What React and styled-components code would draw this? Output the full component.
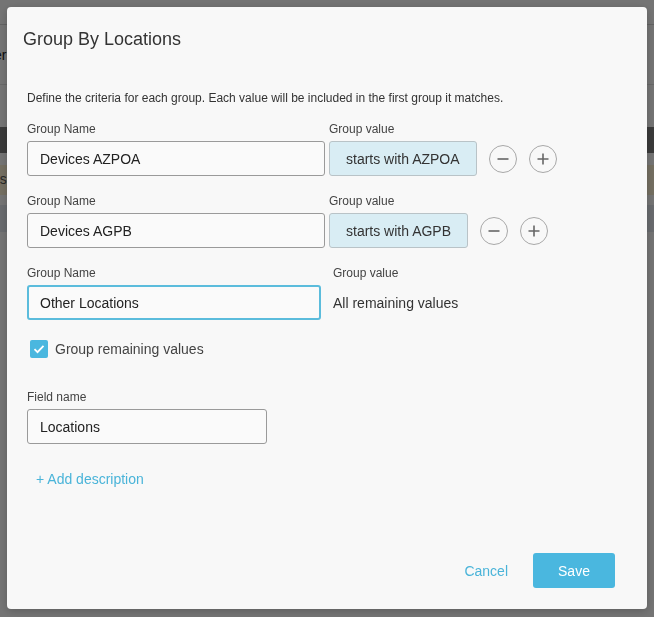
import React from 'react';
import styled, { createGlobalStyle } from 'styled-components';

const GlobalStyle = createGlobalStyle`
  html, body {
    margin: 0;
    padding: 0;
    background: #fff;
    font-family: "Liberation Sans", Arial, sans-serif;
  }
  * { box-sizing: border-box; }
`;

const Page = styled.div`
  width: 654px;
  height: 617px;
  overflow: hidden;
  display: flex;
  flex-direction: column;
  color: #222;
`;

const PageHeader = styled.div`
  height: 25px;
  border-bottom: 1px solid #d8d8d8;
`;

const PageSub = styled.div`
  height: 60px;
  border-bottom: 1px solid #e4e4e4;
  padding: 22px 0 0;
  font-size: 14px;
  margin-left: -6px;
`;

const PageBand = styled.div`
  height: ${(p) => p.h}px;
  margin-top: ${(p) => p.mt}px;
  background: ${(p) => p.bg};
  color: ${(p) => p.fg || '#222'};
  font-size: 14px;
  padding: 6px 0 0;
  margin-left: -8px;
`;

const Overlay = styled.div`
  position: fixed;
  inset: 0;
  background: rgba(0, 0, 0, 0.545);
  display: flex;
  align-items: flex-start;
  justify-content: center;
  padding-top: 7px;
`;

const Modal = styled.div`
  width: 640px;
  height: 602px;
  background: #f8f8f8;
  border-radius: 4px;
  display: flex;
  flex-direction: column;
  box-shadow: 0 2px 8px rgba(0, 0, 0, 0.2);
`;

const Header = styled.div`
  padding: 20px 16px 0;
`;

const Title = styled.h2`
  margin: 0;
  font-size: 18px;
  line-height: 24px;
  font-weight: 400;
  color: #333;
`;

const Body = styled.div`
  padding: 39px 20px 0;
  display: flex;
  flex-direction: column;
`;

const Description = styled.p`
  margin: 0 0 15px;
  font-size: 12px;
  line-height: 16px;
  color: #333;
`;

const GroupRow = styled.div`
  display: flex;
  align-items: flex-end;
  margin-bottom: 17px;
`;

const Field = styled.div`
  display: flex;
  flex-direction: column;
  gap: 4px;
  margin-left: ${(p) => p.ml || 0}px;
`;

const Label = styled.label`
  font-size: 12px;
  line-height: 16px;
  color: #444;
`;

const TextInput = styled.input`
  width: ${(p) => p.w}px;
  height: 35px;
  border: ${(p) => (p.focused ? '2px solid #5bbcdc' : '1px solid #9a9a9a')};
  border-radius: 3px;
  background: #fafafa;
  padding: 0 ${(p) => (p.focused ? 11 : 12)}px;
  font-family: inherit;
  font-size: 14px;
  color: #222;
  outline: none;
`;

const ValuePill = styled.div`
  height: 35px;
  display: flex;
  align-items: center;
  padding: 0 16px;
  background: #d9edf4;
  border: 1px solid #b9c3c7;
  border-radius: 3px;
  font-size: 14px;
  color: #333;
  white-space: nowrap;
`;

const PlainValue = styled.div`
  height: 35px;
  display: flex;
  align-items: center;
  font-size: 14px;
  color: #333;
`;

const Actions = styled.div`
  display: flex;
  gap: 12px;
  margin-left: 12px;
  height: 35px;
  align-items: center;
`;

const CircleButton = styled.button`
  width: 28px;
  height: 28px;
  border-radius: 50%;
  border: 1px solid #a8a8a8;
  background: transparent;
  padding: 0;
  display: flex;
  align-items: center;
  justify-content: center;
  color: #666;
`;

const CheckRow = styled.label`
  display: flex;
  align-items: center;
  gap: 7px;
  margin: 3px 0 31px 3px;
  font-size: 14px;
  color: #444;
`;

const CheckBox = styled.span`
  width: 18px;
  height: 18px;
  border-radius: 2px;
  background: #4ab7df;
  display: flex;
  align-items: center;
  justify-content: center;
`;

const LinkButton = styled.button`
  align-self: flex-start;
  border: none;
  background: transparent;
  font-family: inherit;
  font-size: 14px;
  color: ${(p) => p.color || '#4ab4d9'};
  padding: 8px 9px;
  margin-top: ${(p) => p.mt || 0}px;
`;

const Footer = styled.div`
  margin-top: auto;
  padding: 0 32px 21px 0;
  display: flex;
  justify-content: flex-end;
  align-items: center;
  gap: 9px;
`;

const CancelButton = styled.button`
  border: none;
  background: transparent;
  font-family: inherit;
  font-size: 14px;
  color: #4ab4d9;
  padding: 0 16px;
  height: 35px;
`;

const SaveButton = styled.button`
  width: 82px;
  height: 35px;
  border: none;
  border-radius: 3px;
  background: #4ab7df;
  color: #fff;
  font-family: inherit;
  font-size: 14px;
`;

const Minus = () => (
  <svg width="14" height="14" viewBox="0 0 14 14">
    <path d="M1.5 7h11" stroke="currentColor" strokeWidth="1.6" />
  </svg>
);

const Plus = () => (
  <svg width="14" height="14" viewBox="0 0 14 14">
    <path d="M1.5 7h11M7 1.5v11" stroke="currentColor" strokeWidth="1.6" />
  </svg>
);

const groups = [
  { name: 'Devices AZPOA', value: 'starts with AZPOA' },
  { name: 'Devices AGPB', value: 'starts with AGPB' },
];

export default function App() {
  return (
    <>
      <GlobalStyle />
      <Page>
        <PageHeader />
        <PageSub>er</PageSub>
        <PageBand h={26} mt={42} bg="#7f7f7f" fg="#e8e8e8">
          s
        </PageBand>
        <PageBand h={30} mt={12} bg="#fff4d6" fg="#555">
          es
        </PageBand>
        <PageBand h={27} mt={10} bg="#e6ebf2" />
      </Page>
      <Overlay>
        <Modal>
          <Header>
            <Title>Group By Locations</Title>
          </Header>
          <Body>
            <Description>
              Define the criteria for each group. Each value will be included in the first group it matches.
            </Description>
            {groups.map((g) => (
              <GroupRow key={g.name}>
                <Field>
                  <Label>Group Name</Label>
                  <TextInput w={298} defaultValue={g.name} />
                </Field>
                <Field ml={4}>
                  <Label>Group value</Label>
                  <ValuePill>{g.value}</ValuePill>
                </Field>
                <Actions>
                  <CircleButton>
                    <Minus />
                  </CircleButton>
                  <CircleButton>
                    <Plus />
                  </CircleButton>
                </Actions>
              </GroupRow>
            ))}
            <GroupRow>
              <Field>
                <Label>Group Name</Label>
                <TextInput w={294} focused defaultValue="Other Locations" />
              </Field>
              <Field ml={12}>
                <Label>Group value</Label>
                <PlainValue>All remaining values</PlainValue>
              </Field>
            </GroupRow>
            <CheckRow>
              <CheckBox>
                <svg width="14" height="14" viewBox="0 0 14 14">
                  <path d="M2.5 7.2l3 3 6-6.4" fill="none" stroke="#fff" strokeWidth="1.8" />
                </svg>
              </CheckBox>
              Group remaining values
            </CheckRow>
            <Field>
              <Label>Field name</Label>
              <TextInput w={240} defaultValue="Locations" />
            </Field>
            <LinkButton mt={19}>+ Add description</LinkButton>
          </Body>
          <Footer>
            <CancelButton>Cancel</CancelButton>
            <SaveButton>Save</SaveButton>
          </Footer>
        </Modal>
      </Overlay>
    </>
  );
}
